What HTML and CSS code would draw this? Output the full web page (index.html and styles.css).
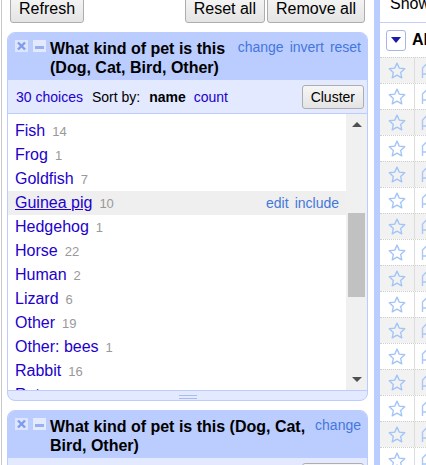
FILE: index.html
```html
<!DOCTYPE html>
<html>
<head>
<meta charset="utf-8">
<link rel="stylesheet" href="styles.css">
</head>
<body>
<div class="app">
  <div class="left">
    <div class="toolbar">
      <button class="btn">Refresh</button>
      <div class="toolbar-right">
        <button class="btn">Reset all</button>
        <button class="btn">Remove all</button>
      </div>
    </div>

    <div class="facet">
      <div class="facet-header">
        <svg class="ico ico-x" viewBox="0 0 13 12"><rect width="13" height="12" fill="#dde5fc"/><path d="M3 2.5 L10 9.5 M10 2.5 L3 9.5" stroke="#7f9cec" stroke-width="2.4"/></svg>
        <svg class="ico ico-min" viewBox="0 0 13 12"><rect width="13" height="12" fill="#e4eafd"/><rect x="2" y="6" width="9" height="3" fill="#98afef"/></svg>
        <div class="facet-title">What kind of pet is this (Dog, Cat, Bird, Other)</div>
        <div class="facet-links"><a href="#">change</a><a href="#">invert</a><a href="#">reset</a></div>
      </div>
      <div class="facet-controls">
        <a class="choices" href="#">30 choices</a>
        <span class="sortby">Sort by:</span>
        <span class="sort-active">name</span>
        <a class="sort-link" href="#">count</a>
        <button class="btn btn-small">Cluster</button>
      </div>
      <div class="facet-body">
        <div class="choice-list">
          <div class="choice"><a class="name" href="#">Fish</a><span class="count">14</span></div>
          <div class="choice"><a class="name" href="#">Frog</a><span class="count">1</span></div>
          <div class="choice"><a class="name" href="#">Goldfish</a><span class="count">7</span></div>
          <div class="choice hover"><a class="name" href="#">Guinea pig</a><span class="count">10</span><span class="edit-links"><a href="#">edit</a><a href="#">include</a></span></div>
          <div class="choice"><a class="name" href="#">Hedgehog</a><span class="count">1</span></div>
          <div class="choice"><a class="name" href="#">Horse</a><span class="count">22</span></div>
          <div class="choice"><a class="name" href="#">Human</a><span class="count">2</span></div>
          <div class="choice"><a class="name" href="#">Lizard</a><span class="count">6</span></div>
          <div class="choice"><a class="name" href="#">Other</a><span class="count">19</span></div>
          <div class="choice"><a class="name" href="#">Other: bees</a><span class="count">1</span></div>
          <div class="choice"><a class="name" href="#">Rabbit</a><span class="count">16</span></div>
          <div class="choice"><a class="name" href="#">Rat</a><span class="count">3</span></div>
        </div>
        <div class="scrollbar">
          <div class="sb-btn"><span class="arrow-up"></span></div>
          <div class="sb-track"><div class="sb-thumb"></div></div>
          <div class="sb-btn"><span class="arrow-down"></span></div>
        </div>
      </div>
      <div class="resize"><span class="grip"></span></div>
    </div>

    <div class="facet">
      <div class="facet-header">
        <svg class="ico ico-x" viewBox="0 0 13 12"><rect width="13" height="12" fill="#dde5fc"/><path d="M3 2.5 L10 9.5 M10 2.5 L3 9.5" stroke="#7f9cec" stroke-width="2.4"/></svg>
        <svg class="ico ico-min" viewBox="0 0 13 12"><rect width="13" height="12" fill="#e4eafd"/><rect x="2" y="6" width="9" height="3" fill="#98afef"/></svg>
        <div class="facet-title">What kind of pet is this (Dog, Cat, Bird, Other)</div>
        <div class="facet-links"><a href="#">change</a></div>
      </div>
      <div class="facet-controls">
        <a class="choices" href="#">30 choices</a>
        <span class="sortby">Sort by:</span>
        <span class="sort-active">name</span>
        <a class="sort-link" href="#">count</a>
        <button class="btn btn-small">Cluster</button>
      </div>
    </div>
  </div>

  <div class="splitter"></div>

  <div class="right">
    <div class="view-top"><span>Show: 5 10 25 50 rows</span></div>
    <div class="view-head">
      <div class="dropdown"><span class="tri"></span></div>
      <span class="all">All</span>
    </div>
    <div class="rows">
      <div class="row odd"><div class="star-cell"><svg class="star" viewBox="0 0 24 23"><polygon points="12,1.5 15.06,8.29 22.46,9.1 16.95,14.11 18.47,21.4 12,17.7 5.53,21.4 7.05,14.11 1.54,9.1 8.94,8.29"/></svg></div><div class="flag-cell"><svg class="flag" viewBox="0 0 14 16"><path d="M1.5 15 V5 L5 1.5 H13 V11 H1.5"/></svg></div></div>
      <div class="row"><div class="star-cell"><svg class="star" viewBox="0 0 24 23"><polygon points="12,1.5 15.06,8.29 22.46,9.1 16.95,14.11 18.47,21.4 12,17.7 5.53,21.4 7.05,14.11 1.54,9.1 8.94,8.29"/></svg></div><div class="flag-cell"><svg class="flag" viewBox="0 0 14 16"><path d="M1.5 15 V5 L5 1.5 H13 V11 H1.5"/></svg></div></div>
      <div class="row odd"><div class="star-cell"><svg class="star" viewBox="0 0 24 23"><polygon points="12,1.5 15.06,8.29 22.46,9.1 16.95,14.11 18.47,21.4 12,17.7 5.53,21.4 7.05,14.11 1.54,9.1 8.94,8.29"/></svg></div><div class="flag-cell"><svg class="flag" viewBox="0 0 14 16"><path d="M1.5 15 V5 L5 1.5 H13 V11 H1.5"/></svg></div></div>
      <div class="row"><div class="star-cell"><svg class="star" viewBox="0 0 24 23"><polygon points="12,1.5 15.06,8.29 22.46,9.1 16.95,14.11 18.47,21.4 12,17.7 5.53,21.4 7.05,14.11 1.54,9.1 8.94,8.29"/></svg></div><div class="flag-cell"><svg class="flag" viewBox="0 0 14 16"><path d="M1.5 15 V5 L5 1.5 H13 V11 H1.5"/></svg></div></div>
      <div class="row odd"><div class="star-cell"><svg class="star" viewBox="0 0 24 23"><polygon points="12,1.5 15.06,8.29 22.46,9.1 16.95,14.11 18.47,21.4 12,17.7 5.53,21.4 7.05,14.11 1.54,9.1 8.94,8.29"/></svg></div><div class="flag-cell"><svg class="flag" viewBox="0 0 14 16"><path d="M1.5 15 V5 L5 1.5 H13 V11 H1.5"/></svg></div></div>
      <div class="row"><div class="star-cell"><svg class="star" viewBox="0 0 24 23"><polygon points="12,1.5 15.06,8.29 22.46,9.1 16.95,14.11 18.47,21.4 12,17.7 5.53,21.4 7.05,14.11 1.54,9.1 8.94,8.29"/></svg></div><div class="flag-cell"><svg class="flag" viewBox="0 0 14 16"><path d="M1.5 15 V5 L5 1.5 H13 V11 H1.5"/></svg></div></div>
      <div class="row odd"><div class="star-cell"><svg class="star" viewBox="0 0 24 23"><polygon points="12,1.5 15.06,8.29 22.46,9.1 16.95,14.11 18.47,21.4 12,17.7 5.53,21.4 7.05,14.11 1.54,9.1 8.94,8.29"/></svg></div><div class="flag-cell"><svg class="flag" viewBox="0 0 14 16"><path d="M1.5 15 V5 L5 1.5 H13 V11 H1.5"/></svg></div></div>
      <div class="row"><div class="star-cell"><svg class="star" viewBox="0 0 24 23"><polygon points="12,1.5 15.06,8.29 22.46,9.1 16.95,14.11 18.47,21.4 12,17.7 5.53,21.4 7.05,14.11 1.54,9.1 8.94,8.29"/></svg></div><div class="flag-cell"><svg class="flag" viewBox="0 0 14 16"><path d="M1.5 15 V5 L5 1.5 H13 V11 H1.5"/></svg></div></div>
      <div class="row odd"><div class="star-cell"><svg class="star" viewBox="0 0 24 23"><polygon points="12,1.5 15.06,8.29 22.46,9.1 16.95,14.11 18.47,21.4 12,17.7 5.53,21.4 7.05,14.11 1.54,9.1 8.94,8.29"/></svg></div><div class="flag-cell"><svg class="flag" viewBox="0 0 14 16"><path d="M1.5 15 V5 L5 1.5 H13 V11 H1.5"/></svg></div></div>
      <div class="row"><div class="star-cell"><svg class="star" viewBox="0 0 24 23"><polygon points="12,1.5 15.06,8.29 22.46,9.1 16.95,14.11 18.47,21.4 12,17.7 5.53,21.4 7.05,14.11 1.54,9.1 8.94,8.29"/></svg></div><div class="flag-cell"><svg class="flag" viewBox="0 0 14 16"><path d="M1.5 15 V5 L5 1.5 H13 V11 H1.5"/></svg></div></div>
      <div class="row odd"><div class="star-cell"><svg class="star" viewBox="0 0 24 23"><polygon points="12,1.5 15.06,8.29 22.46,9.1 16.95,14.11 18.47,21.4 12,17.7 5.53,21.4 7.05,14.11 1.54,9.1 8.94,8.29"/></svg></div><div class="flag-cell"><svg class="flag" viewBox="0 0 14 16"><path d="M1.5 15 V5 L5 1.5 H13 V11 H1.5"/></svg></div></div>
      <div class="row"><div class="star-cell"><svg class="star" viewBox="0 0 24 23"><polygon points="12,1.5 15.06,8.29 22.46,9.1 16.95,14.11 18.47,21.4 12,17.7 5.53,21.4 7.05,14.11 1.54,9.1 8.94,8.29"/></svg></div><div class="flag-cell"><svg class="flag" viewBox="0 0 14 16"><path d="M1.5 15 V5 L5 1.5 H13 V11 H1.5"/></svg></div></div>
      <div class="row odd"><div class="star-cell"><svg class="star" viewBox="0 0 24 23"><polygon points="12,1.5 15.06,8.29 22.46,9.1 16.95,14.11 18.47,21.4 12,17.7 5.53,21.4 7.05,14.11 1.54,9.1 8.94,8.29"/></svg></div><div class="flag-cell"><svg class="flag" viewBox="0 0 14 16"><path d="M1.5 15 V5 L5 1.5 H13 V11 H1.5"/></svg></div></div>
      <div class="row"><div class="star-cell"><svg class="star" viewBox="0 0 24 23"><polygon points="12,1.5 15.06,8.29 22.46,9.1 16.95,14.11 18.47,21.4 12,17.7 5.53,21.4 7.05,14.11 1.54,9.1 8.94,8.29"/></svg></div><div class="flag-cell"><svg class="flag" viewBox="0 0 14 16"><path d="M1.5 15 V5 L5 1.5 H13 V11 H1.5"/></svg></div></div>
      <div class="row odd"><div class="star-cell"><svg class="star" viewBox="0 0 24 23"><polygon points="12,1.5 15.06,8.29 22.46,9.1 16.95,14.11 18.47,21.4 12,17.7 5.53,21.4 7.05,14.11 1.54,9.1 8.94,8.29"/></svg></div><div class="flag-cell"><svg class="flag" viewBox="0 0 14 16"><path d="M1.5 15 V5 L5 1.5 H13 V11 H1.5"/></svg></div></div>
      <div class="row"><div class="star-cell"><svg class="star" viewBox="0 0 24 23"><polygon points="12,1.5 15.06,8.29 22.46,9.1 16.95,14.11 18.47,21.4 12,17.7 5.53,21.4 7.05,14.11 1.54,9.1 8.94,8.29"/></svg></div><div class="flag-cell"><svg class="flag" viewBox="0 0 14 16"><path d="M1.5 15 V5 L5 1.5 H13 V11 H1.5"/></svg></div></div>
    </div>
  </div>
</div>
</body>
</html>
```

FILE: styles.css
```css
* { box-sizing: border-box; }

body {
  margin: 0;
  font-family: "Liberation Sans", Arial, sans-serif;
  color: #000;
  background: #fff;
}

.app {
  display: flex;
  width: 426px;
  height: 465px;
  overflow: hidden;
}

/* ---------- left facet panel ---------- */
.left {
  flex: none;
  width: 373px;
  margin-left: 1px;
  border-left: 1px solid #c8c8c8;
}

.toolbar {
  display: flex;
  justify-content: space-between;
  margin-top: -5px;
  padding: 0 9px 0 8px;
}

.toolbar-right {
  display: flex;
  gap: 2px;
}

.btn {
  font-family: "Liberation Sans", Arial, sans-serif;
  font-size: 16px;
  line-height: 26px;
  height: 28px;
  padding: 0 8px;
  color: #000;
  border: 1px solid #adadad;
  border-radius: 3px;
  background: linear-gradient(#f6f6f6, #e4e4e4);
}

.facet {
  width: 361px;
  margin: 9px 0 0 5px;
  border: 1px solid #bbccff;
  border-radius: 8px;
  overflow: hidden;
  background: #e3e9ff;
}

.facet-header {
  display: flex;
  align-items: flex-start;
  padding: 6px 6px 3px 7px;
  background: #bbccff;
}

.ico {
  flex: none;
  display: block;
  width: 13px;
  height: 12px;
  margin-top: 1px;
}

.ico-x { margin-right: 5px; }
.ico-min { margin-right: 4px; }

.facet-title {
  flex: 1;
  min-width: 0;
  font-weight: bold;
  font-size: 16px;
  line-height: 19px;
}

.facet-links {
  flex: none;
  display: flex;
  gap: 6px;
  margin-left: 6px;
  font-size: 14px;
  line-height: 16px;
}

.facet-links a,
.edit-links a {
  color: #4477dd;
  text-decoration: none;
}

.facet-controls {
  display: flex;
  align-items: center;
  height: 34px;
  padding: 0 3px 0 8px;
  font-size: 14px;
  border-bottom: 1px solid #bbccff;
  white-space: nowrap;
}

.choices,
.sort-link {
  color: #2200cc;
  text-decoration: none;
}

.sortby { margin-left: 9px; }
.sort-active { margin-left: 9px; font-weight: bold; }
.sort-link { margin-left: 8px; }

.btn-small {
  margin-left: auto;
  height: 24px;
  font-size: 14px;
  line-height: 22px;
  padding: 0 8px;
}

.facet-body {
  display: flex;
  height: 277px;
  background: #fff;
  border-bottom: 1px solid #bbccff;
}

.choice-list {
  flex: 1;
  min-width: 0;
  overflow: hidden;
  padding-top: 5px;
}

.choice {
  display: flex;
  align-items: baseline;
  height: 24px;
  line-height: 24px;
  padding: 0 7px;
  white-space: nowrap;
}

.choice .name {
  color: #2200cc;
  font-size: 16px;
  text-decoration: none;
}

.choice .count {
  color: #999;
  font-size: 13px;
  margin-left: 7px;
}

.choice.hover { background: #efefef; }
.choice.hover .name { text-decoration: underline; }

.edit-links {
  margin-left: auto;
  display: flex;
  gap: 6px;
  font-size: 14px;
}

.scrollbar {
  flex: none;
  width: 21px;
  display: flex;
  flex-direction: column;
  background: #f0f0f0;
}

.sb-btn {
  height: 21px;
  display: flex;
  align-items: center;
  justify-content: center;
}

.arrow-up {
  width: 0;
  height: 0;
  border-left: 5px solid transparent;
  border-right: 5px solid transparent;
  border-bottom: 5px solid #505050;
}

.arrow-down {
  width: 0;
  height: 0;
  border-left: 5px solid transparent;
  border-right: 5px solid transparent;
  border-top: 5px solid #505050;
}

.sb-track {
  flex: 1;
  padding: 78px 2px 0;
}

.sb-thumb {
  height: 84px;
  background: #c1c1c1;
}

.resize {
  height: 9px;
  padding-top: 4px;
}

.grip {
  display: block;
  width: 18px;
  height: 4px;
  margin: 0 auto;
  border-top: 1px solid #a9bbef;
  border-bottom: 1px solid #a9bbef;
}

/* ---------- splitter ---------- */
.splitter {
  flex: none;
  width: 6px;
  background: #bbccff;
}

/* ---------- right data panel ---------- */
.right {
  flex: 1;
  min-width: 0;
  overflow: hidden;
}

.view-top {
  height: 28px;
  padding-left: 10px;
  border-bottom: 1px solid #c4cff5;
  white-space: nowrap;
  font-size: 16px;
  line-height: 18px;
}

.view-top span {
  display: block;
  margin-top: -5px;
}

.view-head {
  display: flex;
  align-items: center;
  height: 34px;
  padding-left: 6px;
  white-space: nowrap;
}

.dropdown {
  flex: none;
  width: 20px;
  height: 21px;
  display: flex;
  align-items: center;
  justify-content: center;
  border: 1px solid #a9b5e6;
  border-radius: 3px;
  background: #fff;
}

.tri {
  width: 0;
  height: 0;
  border-left: 5px solid transparent;
  border-right: 5px solid transparent;
  border-top: 6px solid #1a1aa6;
}

.all {
  margin-left: 6px;
  font-weight: bold;
  font-size: 16px;
  line-height: 18px;
}

.row {
  display: flex;
  height: 26px;
  border-top: 1px dotted #cfcfcf;
}

.row.odd { background: #f2f2f2; }

.star-cell {
  flex: none;
  width: 35px;
  display: flex;
  align-items: center;
  justify-content: center;
  border-right: 1px solid #dcdcdc;
}

.star {
  width: 18px;
  height: 17px;
  fill: none;
  stroke: #a2c4f6;
  stroke-width: 1.8;
  stroke-linejoin: round;
}

.flag-cell {
  flex: none;
  display: flex;
  align-items: center;
  padding-left: 6px;
}

.flag {
  width: 14px;
  height: 16px;
  fill: none;
  stroke: #a9c8f6;
  stroke-width: 1.4;
}
```
